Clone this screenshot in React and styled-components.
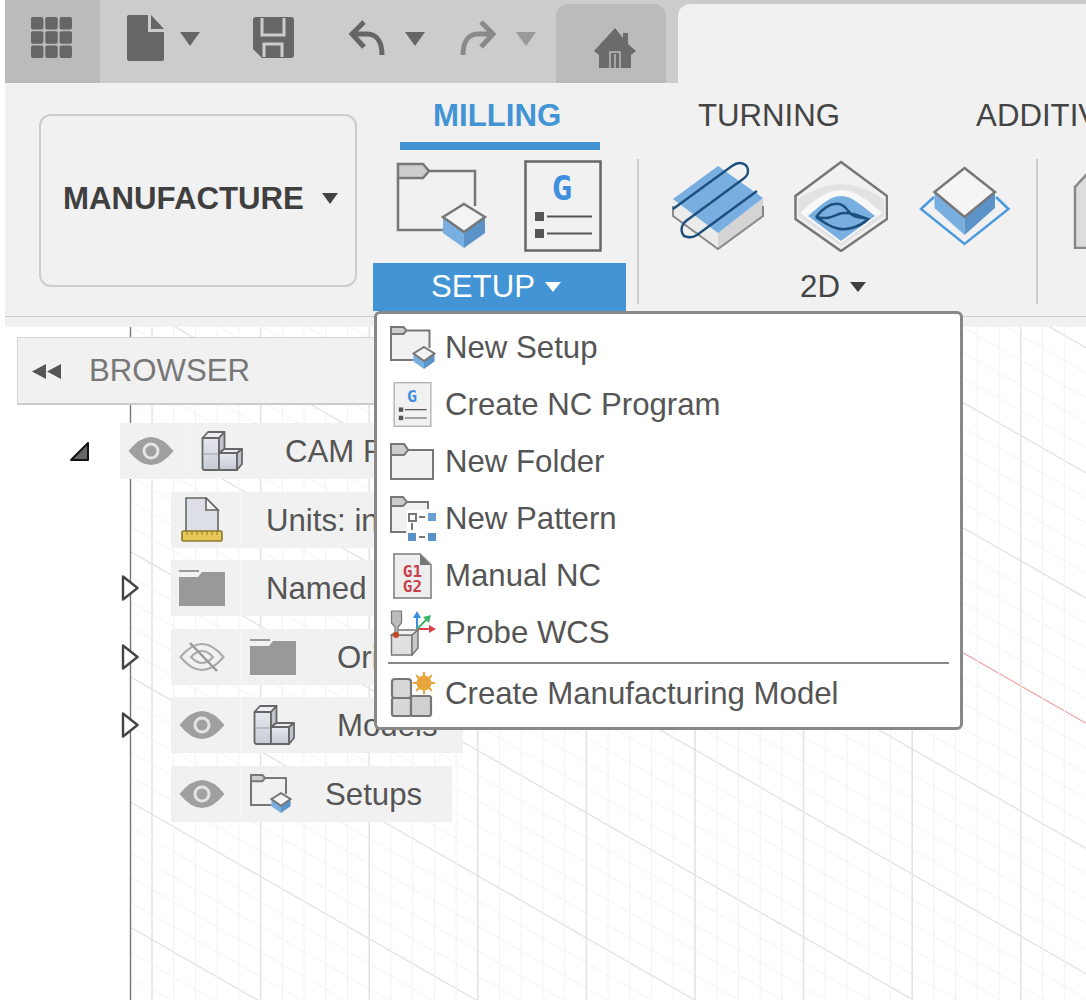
import React, { useId } from 'react';
import styled, { createGlobalStyle } from 'styled-components';

const BLUE = '#4394d4';
const FACE_L = '#78aee0';
const FACE_R = '#5b93c9';

const GlobalStyle = createGlobalStyle`
  html, body {
    margin: 0;
    padding: 0;
    background: #fff;
  }
  * {
    box-sizing: border-box;
  }
  svg {
    display: block;
    flex: none;
  }
`;

const Page = styled.div`
  position: relative;
  width: 1086px;
  height: 1000px;
  overflow: hidden;
  display: flex;
  flex-direction: column;
  background: #fff;
  font-family: 'Liberation Sans', Arial, sans-serif;
  font-size: 31.2px;
  color: #555;
`;

/* top bar */
const TopBar = styled.div`
  margin-left: 5px;
  height: 83px;
  flex: none;
  display: flex;
  align-items: center;
  background: #ccc;
`;
const GridButton = styled.div`
  width: 95px;
  align-self: stretch;
  display: flex;
  align-items: center;
  justify-content: center;
  padding: 0 3px 8px 0;
  background: #bbb;
`;
const Tool = styled.div`
  margin-left: ${(p) => p.$ml}px;
  margin-bottom: 8px;
`;
const Caret = styled.span`
  display: block;
  flex: none;
  width: 0;
  height: 0;
  margin-left: ${(p) => p.$ml || 0}px;
  border-left: ${(p) => p.$w / 2}px solid transparent;
  border-right: ${(p) => p.$w / 2}px solid transparent;
  border-top: ${(p) => p.$h}px solid ${(p) => p.$color};
`;
const BarCaret = styled(Caret)`
  margin-bottom: 5px;
`;
const HomeTab = styled.div`
  margin-left: 20px;
  width: 110px;
  align-self: stretch;
  margin-top: 4px;
  display: flex;
  align-items: center;
  justify-content: center;
  padding: 8px 0 0 8px;
  background: #bbb;
  border-radius: 12px 12px 0 0;
`;
const DocTab = styled.div`
  margin-left: 12px;
  flex: 1;
  align-self: stretch;
  margin-top: 4px;
  background: #f1f1f1;
  border-radius: 12px 0 0 0;
`;

/* ribbon */
const Ribbon = styled.div`
  margin-left: 5px;
  height: 234px;
  flex: none;
  display: flex;
  align-items: flex-start;
  background: #f1f1f1;
  border-bottom: 1px solid #ccc;
`;
const RibbonStrip = styled.div`
  margin-left: 5px;
  height: 10px;
  flex: none;
  background: #f1f1f1;
`;
const WorkspaceButton = styled.div`
  margin: 31px 0 0 34px;
  width: 318px;
  height: 173px;
  flex: none;
  display: flex;
  align-items: center;
  padding: 0 0 4px 22px;
  border: 2px solid #ccc;
  border-radius: 12px;
  font-weight: 700;
  color: #3f3f3f;
`;
const RibbonMain = styled.div`
  margin-left: 16px;
  flex: none;
`;
const Tabs = styled.div`
  height: 67px;
  display: flex;
  white-space: nowrap;
`;
const Tab = styled.div`
  margin-left: ${(p) => p.$ml}px;
  width: ${(p) => (p.$active ? '200px' : 'auto')};
  padding: ${(p) => (p.$active ? '15px 0 0 33px' : '15px 0 0 0')};
  border-bottom: ${(p) => (p.$active ? `8px solid ${BLUE}` : '0')};
  color: ${(p) => (p.$active ? BLUE : '#444')};
  font-weight: ${(p) => (p.$active ? 700 : 400)};
`;
const ToolRow = styled.div`
  margin-top: 9px;
  height: 152px;
  display: flex;
  align-items: flex-start;
`;
const ToolGroup = styled.div`
  width: ${(p) => p.$w}px;
  flex: none;
`;
const GroupIcons = styled.div`
  height: 104px;
  display: flex;
  align-items: center;
  gap: ${(p) => p.$gap}px;
  padding: 0 0 10px ${(p) => p.$pad}px;
`;
const GroupLabel = styled.div`
  height: 48px;
  display: flex;
  align-items: center;
  justify-content: center;
  gap: 10px;
  padding-right: ${(p) => (p.$active ? 7 : 0)}px;
  background: ${(p) => (p.$active ? BLUE : 'transparent')};
  color: ${(p) => (p.$active ? '#fff' : '#444')};
`;
const RibbonDivider = styled.div`
  margin-left: ${(p) => p.$ml}px;
  width: 2px;
  height: 145px;
  flex: none;
  background: #ccc;
`;
const ClippedGroup = styled.div`
  margin: 14px 0 0 35px;
  flex: none;
`;

/* canvas + browser */
const Workspace = styled.div`
  position: relative;
  flex: 1;
  padding-top: 10px;
`;
const CanvasGrid = styled.svg`
  position: absolute;
  left: 0;
  top: 0;
`;
const BrowserPanel = styled.div`
  position: relative;
  margin-left: 17px;
  width: 400px;
  height: 68px;
  display: flex;
  align-items: center;
  gap: 27px;
  padding: 1px 0 0 14px;
  background: #f1f1f1;
  border: 1px solid #d4d4d4;
  border-bottom: 2px solid #ccc;
  color: #777;
`;
const Tree = styled.div`
  position: relative;
  margin-top: 18px;
  padding-left: 69px;
  display: flex;
  flex-direction: column;
  gap: 12.5px;
`;
const TreeLine = styled.div`
  display: flex;
  align-items: center;
`;
const Gutter = styled.div`
  width: ${(p) => p.$w}px;
  flex: none;
  display: flex;
  justify-content: flex-start;
  padding-left: ${(p) => p.$pad || 0}px;
`;
const TreeRow = styled.div`
  width: ${(p) => p.$w}px;
  height: 56px;
  display: flex;
  align-items: center;
  background: #f1f1f1;
  white-space: nowrap;
  overflow: hidden;
`;
const RowCell = styled.div`
  width: ${(p) => p.$w}px;
  flex: none;
  align-self: stretch;
  display: flex;
  align-items: center;
  padding-left: ${(p) => p.$pad}px;
  border-right: ${(p) => (p.$line ? '1px solid #f6f6f6' : '0')};
`;
const RowLabel = styled.span`
  padding-top: 2px;
`;

/* setup dropdown */
const Menu = styled.div`
  position: absolute;
  left: 374px;
  top: 311px;
  width: 589px;
  height: 419px;
  padding-top: 5px;
  background: #fff;
  border: 3px solid #888;
  border-radius: 6px;
`;
const MenuRow = styled.div`
  height: 57px;
  display: flex;
  align-items: center;
  padding-left: 12px;
  white-space: nowrap;
`;
const MenuIconBox = styled.div`
  width: 56px;
  flex: none;
  padding-left: ${(p) => p.$inset}px;
`;
const MenuSeparator = styled.div`
  margin: 1px 11px 1px;
  height: 2px;
  background: #888;
`;

/* icons */
const GridIcon = () => (
  <svg width="41" height="41" viewBox="0 0 41 41">
    {[0, 14.3, 28.6].flatMap((y) =>
      [0, 14.3, 28.6].map((x) => <rect key={`${x}-${y}`} x={x} y={y} width="12.4" height="12.4" rx="2" fill="#666" />)
    )}
  </svg>
);

const FileIcon = () => (
  <svg width="37" height="46" viewBox="0 0 37 46">
    <path d="M2 0H21V17H37V44a2 2 0 0 1-2 2H2a2 2 0 0 1-2-2V2a2 2 0 0 1 2-2Z" fill="#666" />
    <path d="M24 0L37 14H24Z" fill="#666" />
  </svg>
);

const SaveIcon = () => (
  <svg width="41" height="41" viewBox="0 0 41 41">
    <path d="M3 0H38a3 3 0 0 1 3 3V38a3 3 0 0 1-3 3H9L0 32V3a3 3 0 0 1 3-3Z" fill="#666" />
    <path d="M9 1V18H31V1M11 40V27H29V40" fill="none" stroke="#ccc" strokeWidth="3" />
  </svg>
);

const UndoIcon = () => (
  <svg width="38" height="36" viewBox="0 0 38 36">
    <path d="M15 2L3 14L15 27M3 14H18C28 14 33 22 33 35" fill="none" stroke="#666" strokeWidth="5" />
  </svg>
);

const RedoIcon = () => (
  <svg width="38" height="36" viewBox="0 0 38 36">
    <path d="M23 2L35 14L23 27M35 14H20C10 14 5 22 5 35" fill="none" stroke="#8a8a8a" strokeWidth="5" />
  </svg>
);

const HomeIcon = () => (
  <svg width="42" height="40" viewBox="0 0 42 40">
    <path d="M21 0L29 10V5H34V16L42 23L37 27V40H5V27L0 23Z" fill="#6b6b6b" />
    <path d="M16 40V24H26V40M21 26V40" fill="none" stroke="#bbb" strokeWidth="1.5" />
  </svg>
);

const FolderCubeIcon = ({ width, height, fill = 'none', stroke = 2.5 }) => (
  <svg width={width} height={height} viewBox="0 0 92 88">
    <path d="M2 1H27L33 9H79V70H2Z" fill={fill} />
    <path d="M33 9H79V44M2 16V68H47" fill="none" stroke="#777" strokeWidth={stroke} />
    <path d="M2 2H27L33 9L27 16H2Z" fill="#ccc" stroke="#777" strokeWidth={stroke} />
    <path d="M47 55L68 70V86L47 71Z" fill={FACE_L} />
    <path d="M89 55L68 70V86L89 71Z" fill={FACE_R} />
    <path d="M68 42L89 55L68 70L47 55Z" fill="#f4f4f4" stroke="#777" strokeWidth={stroke} />
  </svg>
);

const NcProgramIcon = ({ width, height, fill = 'none', stroke = '#666' }) => (
  <svg width={width} height={height} viewBox="0 0 78 92">
    <rect x="1.5" y="1.5" width="75" height="89" fill={fill} stroke={stroke} strokeWidth="2.5" />
    <text x="38" y="40" textAnchor="middle" fontFamily="'DejaVu Sans Mono', monospace" fontWeight="700" fontSize="34" fill="#3d8fe0">
      G
    </text>
    <rect x="11" y="52" width="9" height="9" fill="#555" />
    <rect x="11" y="69" width="9" height="9" fill="#555" />
    <path d="M23 56.5H68M23 73.5H68" stroke="#555" strokeWidth="2.2" />
  </svg>
);

const PocketPassIcon = () => (
  <svg width="92" height="90" viewBox="0 0 92 90">
    <path d="M1 37V55L46 88V72Z" fill="#ebebeb" />
    <path d="M91 37V55L46 88V72Z" fill="#d4d4d4" />
    <path d="M1 45V55L46 88L91 55V45" fill="none" stroke="#888" strokeWidth="2" />
    <path d="M1 38L46 5L91 37L46 72Z" fill={FACE_L} />
    <path d="M1 48L60 5C68-1 76 3 76 10C76 14 74 16 71 18L14 60C7 66 9 76 16 76C20 77 22 76 25 74L85 30" fill="none" stroke="#1d4f7c" strokeWidth="2.4" />
  </svg>
);

const AdaptiveIcon = () => (
  <svg width="94" height="92" viewBox="0 0 94 92">
    <path d="M47 2L93 36V59L47 91L1.5 59V36Z" fill="#f1f1f1" stroke="#777" strokeWidth="2.5" />
    <path d="M4 39C20 30 33 24 47 24C61 24 74 30 90 39V56L47 86L4 56Z" fill="#e2e2e2" />
    <path d="M6 53C20 40 33 30 47 30C61 30 74 40 88 53L47 83Z" fill="#f8f8f8" />
    <path d="M14 56C25 47 35 36 47 36C59 36 69 47 81 56L47 81Z" fill={FACE_L} />
    <path d="M22 57C30 47 38 43 45 44C53 45 53 53 60 56C66 58 71 58 74 59C65 68 50 71 42 68C34 66 28 61 22 57C34 60 40 56 45 54C53 51 64 55 74 59" fill="none" stroke="#1d4f7c" strokeWidth="2.5" />
  </svg>
);

const FaceIcon = () => (
  <svg width="94" height="82" viewBox="0 0 94 82">
    <path d="M16 32L3 44L46.5 79L90.5 44L78 32" fill="none" stroke="#4b9ae0" strokeWidth="2.5" />
    <path d="M16.5 27L46.5 52V70L16.5 43Z" fill={FACE_L} />
    <path d="M77 27L46.5 52V70L77 43Z" fill={FACE_R} />
    <path d="M46.5 3L77 27L46.5 52L16.5 27Z" fill="#f5f5f5" stroke="#777" strokeWidth="2.5" />
  </svg>
);

const ClippedBlockIcon = () => (
  <svg width="40" height="76" viewBox="0 0 40 76">
    <path d="M2 75V14L14 1H40V75Z" fill="#ddd" stroke="#888" strokeWidth="2.5" />
  </svg>
);

const FolderIcon = () => (
  <svg width="44" height="37" viewBox="0 0 44 37">
    <path d="M1 1H14L18 7H43V36H1Z" fill="#f1f1f1" stroke="#777" strokeWidth="2" />
    <path d="M1 1H14L18 7L14 12H1Z" fill="#ccc" stroke="#777" strokeWidth="2" />
  </svg>
);

const PatternIcon = () => (
  <svg width="46" height="46" viewBox="0 0 46 46">
    <path d="M1 1H13L17 6H38V14H17V36H1Z" fill="#f1f1f1" />
    <path d="M17 6H38V13M1 10V36H16" fill="none" stroke="#777" strokeWidth="2" />
    <path d="M1 1H13L17 6L13 10H1Z" fill="#ccc" stroke="#777" strokeWidth="2" />
    <rect x="19" y="18" width="7" height="7" fill="#fff" stroke="#777" strokeWidth="2" />
    <rect x="38" y="17" width="8" height="8" fill="#6aa0d4" />
    <rect x="18" y="37" width="8" height="8" fill="#5b93c9" />
    <rect x="38" y="37" width="8" height="8" fill="#5b93c9" />
    <path d="M29 21H35M29 41H35M22 27V34" stroke="#777" strokeWidth="2" />
  </svg>
);

const ManualNcIcon = () => (
  <svg width="39" height="46" viewBox="0 0 39 46">
    <path d="M1 1H27L38 12V45H1Z" fill="#eee" stroke="#999" strokeWidth="2" />
    <path d="M27 1L38 12H27Z" fill="#777" />
    <text x="19.5" y="24" textAnchor="middle" fontFamily="'DejaVu Sans Mono', monospace" fontWeight="700" fontSize="16" fill="#c8404a">
      G1
    </text>
    <text x="19.5" y="39" textAnchor="middle" fontFamily="'DejaVu Sans Mono', monospace" fontWeight="700" fontSize="16" fill="#c8404a">
      G2
    </text>
  </svg>
);

const ProbeIcon = () => (
  <svg width="46" height="46" viewBox="0 0 46 46">
    <path d="M1.5 25H22V45H1.5Z" fill="#e0e0e0" stroke="#777" strokeWidth="1.5" />
    <path d="M1.5 25L8 20H28L22 25Z" fill="#f3f3f3" stroke="#777" strokeWidth="1.5" />
    <path d="M22 25L28 20V38L22 45Z" fill="#c8c8c8" stroke="#777" strokeWidth="1.5" />
    <path d="M1.5 1H11.5V13L8 17V24H5V17L1.5 13Z" fill="#bbb" stroke="#777" strokeWidth="1.2" />
    <circle cx="6" cy="25" r="3" fill="#c9491f" />
    <path d="M27 19V6" stroke="#3d8fe0" strokeWidth="2" />
    <path d="M27 1L31 8H23Z" fill="#3d8fe0" />
    <path d="M27 19H40" stroke="#d8404a" strokeWidth="2" />
    <path d="M46 19L39 15V23Z" fill="#d8404a" />
    <path d="M27 19L37 9" stroke="#3fb56b" strokeWidth="2" />
    <path d="M41 5L39 13L33 7Z" fill="#3fb56b" />
  </svg>
);

const ModelIcon = () => (
  <svg width="46" height="46" viewBox="0 0 46 46">
    <rect x="2" y="8" width="19" height="19" rx="3" fill="#d8d8d8" stroke="#777" strokeWidth="2.2" />
    <rect x="2" y="27" width="19" height="18" rx="2" fill="#d8d8d8" stroke="#777" strokeWidth="2.2" />
    <rect x="21" y="25" width="20" height="20" rx="2" fill="#d0d0d0" stroke="#777" strokeWidth="2.2" />
    <circle cx="34" cy="12" r="7.5" fill="#e8a63a" />
    {[0, 45, 90, 135].map((a) => (
      <rect key={a} x="33" y="1" width="2" height="22" fill="#e8a63a" transform={`rotate(${a} 34 12)`} />
    ))}
  </svg>
);

const EyeIcon = () => (
  <svg width="46" height="28" viewBox="0 0 46 28">
    <path d="M0.5 14Q23-14 45.5 14Q23 42 0.5 14Z" fill="#a0a0a0" />
    <circle cx="23" cy="14" r="7" fill="#a0a0a0" stroke="#e4e4e4" strokeWidth="3" />
  </svg>
);

const EyeOffIcon = () => (
  <svg width="46" height="30" viewBox="0 0 46 30">
    <path d="M1.5 15Q23-11 44.5 15Q23 41 1.5 15Z" fill="none" stroke="#aaa" strokeWidth="2" />
    <path d="M12 15Q23 3 34 15Q23 27 12 15Z" fill="none" stroke="#aaa" strokeWidth="2" />
    <path d="M11 1L38 29" stroke="#999" strokeWidth="2.5" />
  </svg>
);

const BlocksIcon = () => {
  const id = useId();
  return (
    <svg width="42" height="40" viewBox="0 0 42 40">
      <defs>
        <linearGradient id={id} x1="0" y1="0" x2="0" y2="1">
          <stop offset="0" stopColor="#e6e8ee" />
          <stop offset="1" stopColor="#c6cbd5" />
        </linearGradient>
      </defs>
      <g stroke="#666" strokeWidth="1.8" strokeLinejoin="round">
        <path d="M1.5 7H18V39H3.5a2 2 0 0 1-2-2Z" fill={`url(#${id})`} />
        <path d="M1.5 7L7 1H23.5L18 7Z" fill="#eceef3" />
        <path d="M18 7L23.5 1V18L18 22Z" fill="#bfc4ce" />
        <path d="M18 22H36V39H18Z" fill={`url(#${id})`} />
        <path d="M18 22L23.5 18H41L36 22Z" fill="#eceef3" />
        <path d="M36 22L41 18V33L36 39Z" fill="#bfc4ce" />
      </g>
      <path d="M2.5 23H17" stroke="#a5aab5" strokeWidth="1.2" />
    </svg>
  );
};

const UnitsIcon = () => (
  <svg width="42" height="45" viewBox="0 0 42 45">
    <path d="M5 1H25L37 13V35H5Z" fill="#dcdfe6" stroke="#666" strokeWidth="1.6" />
    <path d="M25 1V13H37Z" fill="#f4f4f4" stroke="#666" strokeWidth="1.6" />
    <rect x="1" y="34" width="40" height="10" rx="1.5" fill="#e8c658" stroke="#8a7a2a" strokeWidth="1.6" />
    <path d="M6 34V38M11 34V38M16 34V38M21 34V38M26 34V38M31 34V38M36 34V38" stroke="#8a7a2a" strokeWidth="1" />
  </svg>
);

const SolidFolderIcon = () => (
  <svg width="46" height="36" viewBox="0 0 46 36">
    <path d="M0 0H20V2H0ZM0 7H19L23 2H46V36H0Z" fill="#999" />
  </svg>
);

const OpenArrow = () => (
  <svg width="21" height="21" viewBox="0 0 21 21">
    <path d="M2 19L19 2V19Z" fill="#666" stroke="#111" strokeWidth="2" strokeLinejoin="round" />
  </svg>
);

const ClosedArrow = () => (
  <svg width="18" height="26" viewBox="0 0 18 26">
    <path d="M2 1.5L16.5 13L2 24.5Z" fill="#fff" stroke="#444" strokeWidth="2.4" strokeLinejoin="round" />
  </svg>
);

const CollapseArrows = () => (
  <svg width="30" height="15" viewBox="0 0 30 15">
    <path d="M0 7.5L14 0V15ZM15 7.5L29 0V15Z" fill="#555" />
  </svg>
);

// page coordinates, measured from the reference
const GRID_TOP = 327;
const verticals = Array.from({ length: 43 }, (_, k) => ({ x: 152 + k * 21.72, major: k % 5 === 0 }));
const diagonals = Array.from({ length: 50 }, (_, i) => {
  const k = i - 16;
  return { y: 175.8 + k * 25.04, major: k % 5 === 0, axis: k === 0 };
});

const Grid = () => (
  <CanvasGrid width="1086" height="673" viewBox={`0 ${GRID_TOP} 1086 673`}>
    {diagonals.map((d) => (
      <line
        key={d.y}
        x1="130"
        y1={d.y}
        x2="1086"
        y2={d.y + 956 * 0.5727}
        stroke={d.axis ? '#f4a9a9' : d.major ? '#e2e2e2' : '#f3f3f3'}
        strokeWidth={d.major ? 1.3 : 1}
      />
    ))}
    {verticals.map((v) => (
      <line key={v.x} x1={v.x} y1={GRID_TOP} x2={v.x} y2="1000" stroke={v.major ? '#e2e2e2' : '#f2f2f2'} strokeWidth={v.major ? 1.5 : 1} />
    ))}
    <line x1="130.5" y1={GRID_TOP} x2="130.5" y2="1000" stroke="#777" strokeWidth="1.4" />
  </CanvasGrid>
);

const menuItems = [
  { label: 'New Setup', inset: 1, icon: <FolderCubeIcon width={46} height={44} fill="#f1f1f1" stroke={4} /> },
  { label: 'Create NC Program', inset: 4, icon: <NcProgramIcon width={39} height={45} fill="#f1f1f1" stroke="#aaa" /> },
  { label: 'New Folder', inset: 1, icon: <FolderIcon /> },
  { label: 'New Pattern', inset: 1, icon: <PatternIcon /> },
  { label: 'Manual NC', inset: 4, icon: <ManualNcIcon /> },
  { label: 'Probe WCS', inset: 1, icon: <ProbeIcon /> },
];

const SetupMenu = () => (
  <Menu>
    {menuItems.map((item) => (
      <MenuRow key={item.label}>
        <MenuIconBox $inset={item.inset}>{item.icon}</MenuIconBox>
        {item.label}
      </MenuRow>
    ))}
    <MenuSeparator />
    <MenuRow>
      <MenuIconBox $inset={1}>
        <ModelIcon />
      </MenuIconBox>
      Create Manufacturing Model
    </MenuRow>
  </Menu>
);

export default function App() {
  return (
    <Page>
      <GlobalStyle />
      <TopBar>
        <GridButton>
          <GridIcon />
        </GridButton>
        <Tool $ml={27}>
          <FileIcon />
        </Tool>
        <BarCaret $ml={16} $w={20} $h={14} $color="#666" />
        <Tool $ml={53}>
          <SaveIcon />
        </Tool>
        <Tool $ml={55}>
          <UndoIcon />
        </Tool>
        <BarCaret $ml={18} $w={20} $h={14} $color="#666" />
        <Tool $ml={33}>
          <RedoIcon />
        </Tool>
        <BarCaret $ml={20} $w={20} $h={14} $color="#999" />
        <HomeTab>
          <HomeIcon />
        </HomeTab>
        <DocTab />
      </TopBar>

      <Ribbon>
        <WorkspaceButton>
          MANUFACTURE
          <Caret $ml={18} $w={17} $h={11} $color="#444" />
        </WorkspaceButton>
        <RibbonMain>
          <Tabs>
            <Tab $ml={27} $active>
              MILLING
            </Tab>
            <Tab $ml={98}>TURNING</Tab>
            <Tab $ml={136}>ADDITIVE</Tab>
          </Tabs>
          <ToolRow>
            <ToolGroup $w={253}>
              <GroupIcons $pad={23} $gap={36}>
                <FolderCubeIcon width={92} height={88} />
                <NcProgramIcon width={78} height={92} />
              </GroupIcons>
              <GroupLabel $active>
                SETUP
                <Caret $w={16} $h={10} $color="#fff" />
              </GroupLabel>
            </ToolGroup>
            <RibbonDivider $ml={11} />
            <ToolGroup $w={388}>
              <GroupIcons $pad={33} $gap={30}>
                <PocketPassIcon />
                <AdaptiveIcon />
                <FaceIcon />
              </GroupIcons>
              <GroupLabel>
                2D
                <Caret $w={16} $h={10} $color="#3f3f3f" />
              </GroupLabel>
            </ToolGroup>
            <RibbonDivider $ml={9} />
            <ClippedGroup>
              <ClippedBlockIcon />
            </ClippedGroup>
          </ToolRow>
        </RibbonMain>
      </Ribbon>
      <RibbonStrip />

      <Workspace>
        <Grid />
        <BrowserPanel>
          <CollapseArrows />
          BROWSER
        </BrowserPanel>
        <Tree>
          <TreeLine>
            <Gutter $w={51}>
              <OpenArrow />
            </Gutter>
            <TreeRow $w={290}>
              <RowCell $w={70} $pad={8} $line>
                <EyeIcon />
              </RowCell>
              <RowCell $w={95} $pad={11}>
                <BlocksIcon />
              </RowCell>
              <RowLabel>CAM Root</RowLabel>
            </TreeRow>
          </TreeLine>
          <TreeLine>
            <Gutter $w={102} />
            <TreeRow $w={240}>
              <RowCell $w={70} $pad={10} $line>
                <UnitsIcon />
              </RowCell>
              <RowCell $w={25} $pad={0} />
              <RowLabel>Units: inch</RowLabel>
            </TreeRow>
          </TreeLine>
          <TreeLine>
            <Gutter $w={102} $pad={52}>
              <ClosedArrow />
            </Gutter>
            <TreeRow $w={240}>
              <RowCell $w={70} $pad={8} $line>
                <SolidFolderIcon />
              </RowCell>
              <RowCell $w={25} $pad={0} />
              <RowLabel>Named Views</RowLabel>
            </TreeRow>
          </TreeLine>
          <TreeLine>
            <Gutter $w={102} $pad={52}>
              <ClosedArrow />
            </Gutter>
            <TreeRow $w={260}>
              <RowCell $w={70} $pad={8} $line>
                <EyeOffIcon />
              </RowCell>
              <RowCell $w={96} $pad={9}>
                <SolidFolderIcon />
              </RowCell>
              <RowLabel>Origin</RowLabel>
            </TreeRow>
          </TreeLine>
          <TreeLine>
            <Gutter $w={102} $pad={52}>
              <ClosedArrow />
            </Gutter>
            <TreeRow $w={292}>
              <RowCell $w={70} $pad={8} $line>
                <EyeIcon />
              </RowCell>
              <RowCell $w={96} $pad={12}>
                <BlocksIcon />
              </RowCell>
              <RowLabel>Models</RowLabel>
            </TreeRow>
          </TreeLine>
          <TreeLine>
            <Gutter $w={102} />
            <TreeRow $w={281}>
              <RowCell $w={70} $pad={8} $line>
                <EyeIcon />
              </RowCell>
              <RowCell $w={84} $pad={9}>
                <FolderCubeIcon width={42} height={40} stroke={4.5} />
              </RowCell>
              <RowLabel>Setups</RowLabel>
            </TreeRow>
          </TreeLine>
        </Tree>
      </Workspace>

      <SetupMenu />
    </Page>
  );
}
